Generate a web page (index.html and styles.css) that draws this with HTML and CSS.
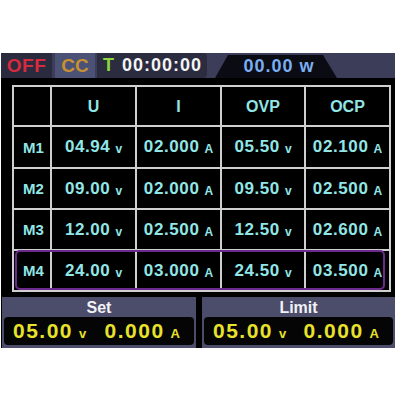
FILE: index.html
```html
<!DOCTYPE html>
<html>
<head>
<meta charset="utf-8">
<link rel="stylesheet" href="styles.css">
</head>
<body>
<div class="screen">
  <div class="topbar">
    <div class="off">OFF</div>
    <div class="cc">CC</div>
    <div class="timer"><span class="t">T</span><span class="time">00:00:00</span></div>
    <div class="power"><span class="pw">00.00</span><span class="pu">w</span></div>
  </div>
  <div class="main">
    <div class="grid">
      <div class="cell"></div>
      <div class="cell head">U</div>
      <div class="cell head">I</div>
      <div class="cell head">OVP</div>
      <div class="cell head">OCP</div>

      <div class="cell lbl">M1</div>
      <div class="cell"><span class="num">04.94</span><span class="unit">v</span></div>
      <div class="cell"><span class="num">02.000</span><span class="unit">A</span></div>
      <div class="cell"><span class="num">05.50</span><span class="unit">v</span></div>
      <div class="cell"><span class="num">02.100</span><span class="unit">A</span></div>

      <div class="cell lbl">M2</div>
      <div class="cell"><span class="num">09.00</span><span class="unit">v</span></div>
      <div class="cell"><span class="num">02.000</span><span class="unit">A</span></div>
      <div class="cell"><span class="num">09.50</span><span class="unit">v</span></div>
      <div class="cell"><span class="num">02.500</span><span class="unit">A</span></div>

      <div class="cell lbl">M3</div>
      <div class="cell"><span class="num">12.00</span><span class="unit">v</span></div>
      <div class="cell"><span class="num">02.500</span><span class="unit">A</span></div>
      <div class="cell"><span class="num">12.50</span><span class="unit">v</span></div>
      <div class="cell"><span class="num">02.600</span><span class="unit">A</span></div>

      <div class="cell lbl">M4</div>
      <div class="cell"><span class="num">24.00</span><span class="unit">v</span></div>
      <div class="cell"><span class="num">03.000</span><span class="unit">A</span></div>
      <div class="cell"><span class="num">24.50</span><span class="unit">v</span></div>
      <div class="cell"><span class="num">03.500</span><span class="unit">A</span></div>

      <div class="sel"></div>
    </div>
  </div>
  <div class="panels">
    <div class="panel set">
      <div class="ptitle">Set</div>
      <div class="pval">
        <span class="grp"><span class="big">05.00</span><span class="sm">v</span></span>
        <span class="grp"><span class="big">0.000</span><span class="sm">A</span></span>
      </div>
    </div>
    <div class="panel limit">
      <div class="ptitle">Limit</div>
      <div class="pval">
        <span class="grp"><span class="big">05.00</span><span class="sm">v</span></span>
        <span class="grp"><span class="big">0.000</span><span class="sm">A</span></span>
      </div>
    </div>
  </div>
</div>
</body>
</html>
```
FILE: styles.css
```css
html, body {
  margin: 0;
  padding: 0;
  background: #ffffff;
}
body {
  font-family: "Liberation Sans", Arial, sans-serif;
  font-weight: bold;
}
.screen {
  margin: 53px 0 0 1px;
  width: 394px;
  background: #000000;
}
.topbar {
  height: 25px;
  background: #3b3d59;
  display: flex;
  align-items: stretch;
}
.off {
  width: 51px;
  background: #2b2b3f;
  color: #d62a3d;
  font-size: 19px;
  display: flex;
  align-items: center;
  justify-content: center;
  letter-spacing: 0.5px;
}
.cc {
  width: 40px;
  margin-left: 3px;
  background: #4b5275;
  color: #c99030;
  font-size: 19px;
  display: flex;
  align-items: center;
  justify-content: center;
}
.timer {
  width: 110px;
  margin-left: 2px;
  background: #2b2c40;
  border-radius: 0 4px 4px 0;
  display: flex;
  align-items: center;
}
.t {
  color: #8cd83a;
  font-size: 18px;
  margin-left: 6px;
}
.time {
  color: #f4f4f4;
  font-size: 18px;
  letter-spacing: 1px;
  margin-left: 8px;
}
.power {
  margin-left: 8px;
  margin-top: 2px;
  width: 122px;
  background: #0b0b14;
  clip-path: polygon(13px 0, 108px 0, 122px 100%, 0 100%);
  display: flex;
  align-items: center;
  justify-content: center;
  color: #7aaef0;
  font-size: 18px;
  letter-spacing: 1px;
  padding-left: 6px;
  box-sizing: border-box;
}
.pu {
  margin-left: 6px;
}
.main {
  height: 219px;
  box-sizing: border-box;
  padding: 7px 0 0 11px;
}
.grid {
  position: relative;
  display: grid;
  grid-template-columns: 36px 83px 83px 82px 83px;
  grid-template-rows: 38px 40px 39px 39px 39px;
  gap: 2px;
  padding: 2px;
  background: #cfcfcf;
  width: max-content;
}
.cell {
  background: #000000;
  color: #92e6e6;
  display: flex;
  align-items: center;
  justify-content: center;
}
.head {
  font-size: 16px;
  padding-top: 2px;
}
.lbl {
  font-size: 15px;
  padding-left: 3px;
}
.num {
  font-size: 17px;
  letter-spacing: 0.6px;
}
.unit {
  font-size: 12px;
  margin-left: 5px;
  margin-top: 4px;
}
.sel {
  position: absolute;
  left: 3px;
  top: 165px;
  width: 370px;
  height: 40px;
  box-sizing: border-box;
  border: 2px solid #6d2a8e;
  border-radius: 5px;
}
.panels {
  display: flex;
  gap: 6px;
  padding-left: 1px;
}
.panel {
  height: 51px;
  background: #4b4d6b;
  display: flex;
  flex-direction: column;
}
.set {
  width: 194px;
}
.limit {
  width: 193px;
}
.ptitle {
  height: 20px;
  color: #f2f2f6;
  font-size: 16px;
  display: flex;
  align-items: center;
  justify-content: center;
  padding-top: 1px;
  box-sizing: border-box;
}
.pval {
  height: 28px;
  margin: 0 2px 0 2px;
  background: #050505;
  border-radius: 4px;
  display: flex;
  align-items: center;
  justify-content: space-between;
  padding: 0 14px 0 9px;
}
.grp {
  display: flex;
  align-items: baseline;
}
.big {
  color: #e8e22c;
  font-size: 21px;
  letter-spacing: 1.5px;
}
.sm {
  color: #e8e22c;
  font-size: 13px;
  margin-left: 6px;
}
```
